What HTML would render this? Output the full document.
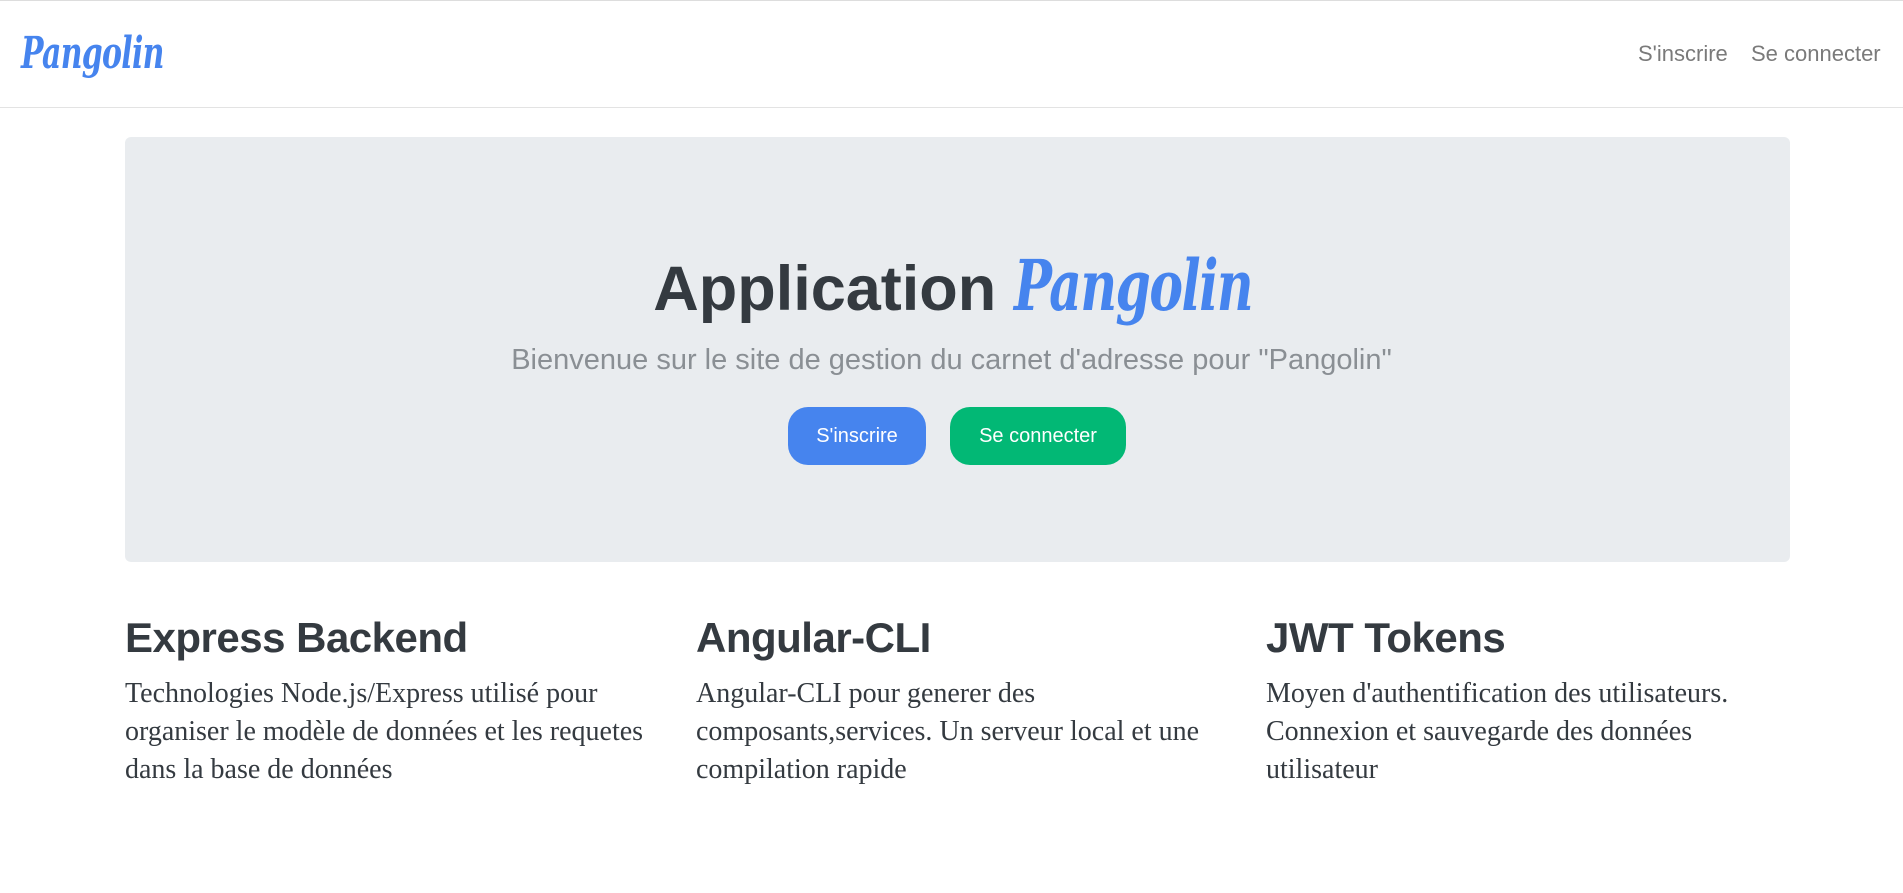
<!DOCTYPE html>
<html><head><meta charset="utf-8"><style>
*{margin:0;padding:0;box-sizing:border-box}
body{width:1903px;height:893px;background:#fff;font-family:"Liberation Sans",sans-serif;color:#343a40;position:relative;overflow:hidden}
.top{position:absolute;left:0;top:0;width:1903px;height:1px;background:#ddd}
.nav{position:absolute;left:0;top:0;width:1903px;height:108px;border-bottom:1px solid #e3e3e3}
.logo{position:absolute;left:21px;top:28px;font-family:"DejaVu Serif",cursive;font-style:italic;font-weight:bold;font-size:44px;color:#4684ee;letter-spacing:-1px;transform:scaleX(0.68);transform-origin:left top}
.nl{position:absolute;top:41px;font-size:22px;color:#7a7a7a}
.jum{position:absolute;left:125px;top:137px;width:1665px;height:425px;background:#e9ecef;border-radius:6px}
h1{position:absolute;left:0;width:1903px;top:244px;text-align:center;font-size:63px;font-weight:bold;color:#343a40;white-space:nowrap}
h1 span{display:inline-block;font-family:"DejaVu Serif",cursive;font-style:italic;color:#4684ee;font-size:70px;letter-spacing:-2px;width:236px;transform:scaleX(0.72);transform-origin:left center;text-align:left;white-space:nowrap}
.lead{position:absolute;left:0;width:1903px;top:344px;text-align:center;font-size:29px;color:#8a8f94}
.btn{position:absolute;top:407px;height:58px;border-radius:20px;color:#fff;font-size:20px;line-height:58px;text-align:center}
h2{position:absolute;top:614px;font-size:42px;font-weight:bold;color:#343a40;letter-spacing:-0.5px}
p{position:absolute;top:675px;width:545px;font-family:"Liberation Serif",serif;font-size:28px;line-height:38px;color:#343a40}
</style></head><body>
<div class="nav"></div><div class="top"></div>
<div class="logo">Pangolin</div>
<div class="nl" style="left:1638px">S'inscrire</div>
<div class="nl" style="left:1751px">Se connecter</div>
<div class="jum"></div>
<h1>Application <span>Pangolin</span></h1>
<div class="lead">Bienvenue sur le site de gestion du carnet d'adresse pour "Pangolin"</div>
<div class="btn" style="left:788px;width:138px;background:#4684ee">S'inscrire</div>
<div class="btn" style="left:950px;width:176px;background:#02b875">Se connecter</div>
<h2 style="left:125px">Express Backend</h2>
<h2 style="left:696px">Angular-CLI</h2>
<h2 style="left:1266px">JWT Tokens</h2>
<p style="left:125px">Technologies Node.js/Express utilisé pour organiser le modèle de données et les requetes dans la base de données</p>
<p style="left:696px">Angular-CLI pour generer des composants,services. Un serveur local et une compilation rapide</p>
<p style="left:1266px">Moyen d'authentification des utilisateurs. Connexion et sauvegarde des données utilisateur</p>
</body></html>
